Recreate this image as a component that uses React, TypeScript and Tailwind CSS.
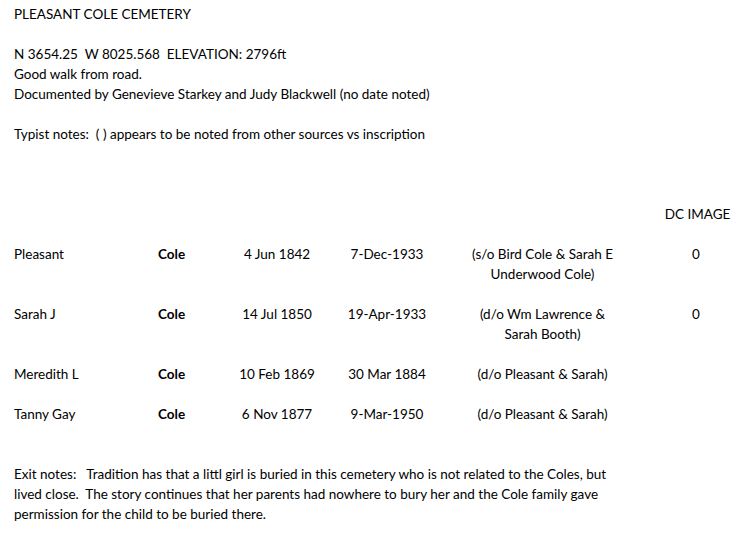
import React from 'react';

type Burial = {
  given: string;
  surname: string;
  born: string;
  died: string;
  notes: string;
  dc?: string;
};

const burials: Burial[] = [
  { given: 'Pleasant', surname: 'Cole', born: '4 Jun 1842', died: '7-Dec-1933', notes: '(s/o Bird Cole & Sarah E Underwood Cole)', dc: '0' },
  { given: 'Sarah J', surname: 'Cole', born: '14 Jul 1850', died: '19-Apr-1933', notes: '(d/o Wm Lawrence & Sarah Booth)', dc: '0' },
  { given: 'Meredith L', surname: 'Cole', born: '10 Feb 1869', died: '30 Mar 1884', notes: '(d/o Pleasant & Sarah)' },
  { given: 'Tanny Gay', surname: 'Cole', born: '6 Nov 1877', died: '9-Mar-1950', notes: '(d/o Pleasant & Sarah)' },
];

const Row: React.FC<{ b: Burial }> = ({ b }) => (
  <div className="flex items-start">
    <div className="w-[144px]">{b.given}</div>
    <div className="w-[74px] font-bold">{b.surname}</div>
    <div className="w-[90px] text-center">{b.born}</div>
    <div className="w-[130px] text-center">{b.died}</div>
    <div className="ml-[13px] w-[155px] text-center">{b.notes}</div>
    <div className="ml-[28px] w-[96px] text-center">{b.dc ?? ''}</div>
  </div>
);

export default function App() {
  return (
    <div className="w-[745px] h-[547px] bg-white text-black pl-[14px] pt-[4px] text-[13.5px] leading-[20px] font-['Lato','Liberation_Sans',sans-serif] overflow-hidden">
      <div>PLEASANT COLE CEMETERY</div>

      <div className="mt-[20px]">N 3654.25&nbsp; W 8025.568&nbsp; ELEVATION: 2796ft</div>
      <div>Good walk from road.</div>
      <div>Documented by Genevieve Starkey and Judy Blackwell (no date noted)</div>

      <div className="mt-[20px]">Typist notes:&nbsp; ( ) appears to be noted from other sources vs inscription</div>

      <div className="mt-[60px] flex">
        <div className="ml-[636px] w-[96px] text-center">DC IMAGE</div>
      </div>

      <div className="mt-[20px] flex flex-col gap-[20px]">
        {burials.map((b) => (
          <Row key={b.given} b={b} />
        ))}
      </div>

      <div className="mt-[40px] w-[612px]">
        Exit notes:&nbsp;&nbsp; Tradition has that a littl girl is buried in this cemetery who is not related to the Coles, but lived close.&nbsp; The story continues that her parents had nowhere to bury her and the Cole family gave permission for the child to be buried there.
      </div>
    </div>
  );
}
